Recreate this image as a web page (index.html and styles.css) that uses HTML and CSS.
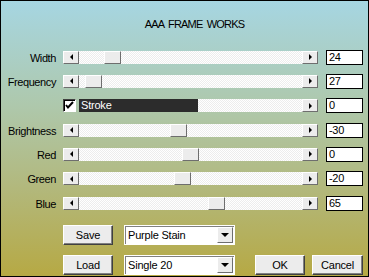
FILE: index.html
```html
<!DOCTYPE html>
<html>
<head>
<meta charset="utf-8">
<link rel="stylesheet" href="styles.css">
</head>
<body>
<div class="dialog">
  <div class="title">AAA FRAME WORKS</div>
  <div class="rows">
    <div class="row">
      <span class="label">Width</span>
      <div class="sb">
        <span class="btn"><i class="tri-l"></i></span>
        <div class="track"><span class="thumb" style="margin-left:25px"></span></div>
        <span class="btn"><i class="tri-r"></i></span>
      </div>
      <span class="edit">24</span>
    </div>
    <div class="row">
      <span class="label">Frequency</span>
      <div class="sb">
        <span class="btn"><i class="tri-l"></i></span>
        <div class="track"><span class="thumb" style="margin-left:6px"></span></div>
        <span class="btn"><i class="tri-r"></i></span>
      </div>
      <span class="edit">27</span>
    </div>
    <div class="row">
      <span class="label"></span>
      <div class="sb">
        <span class="check"><svg width="11" height="11" viewBox="0 0 11 11"><path d="M2 5 L4 7.5 L9 2" fill="none" stroke="#000" stroke-width="2"/></svg></span>
        <span class="stroke">Stroke</span>
        <div class="track"></div>
        <span class="btn"><i class="tri-r"></i></span>
      </div>
      <span class="edit">0</span>
    </div>
    <div class="row">
      <span class="label">Brightness</span>
      <div class="sb">
        <span class="btn"><i class="tri-l"></i></span>
        <div class="track"><span class="thumb" style="margin-left:91px"></span></div>
        <span class="btn"><i class="tri-r"></i></span>
      </div>
      <span class="edit">-30</span>
    </div>
    <div class="row">
      <span class="label">Red</span>
      <div class="sb">
        <span class="btn"><i class="tri-l"></i></span>
        <div class="track"><span class="thumb" style="margin-left:103px"></span></div>
        <span class="btn"><i class="tri-r"></i></span>
      </div>
      <span class="edit">0</span>
    </div>
    <div class="row">
      <span class="label">Green</span>
      <div class="sb">
        <span class="btn"><i class="tri-l"></i></span>
        <div class="track"><span class="thumb" style="margin-left:95px"></span></div>
        <span class="btn"><i class="tri-r"></i></span>
      </div>
      <span class="edit">-20</span>
    </div>
    <div class="row">
      <span class="label">Blue</span>
      <div class="sb">
        <span class="btn"><i class="tri-l"></i></span>
        <div class="track"><span class="thumb" style="margin-left:129px"></span></div>
        <span class="btn"><i class="tri-r"></i></span>
      </div>
      <span class="edit">65</span>
    </div>
  </div>
  <div class="bottom">
    <div class="brow">
      <span class="button">Save</span>
      <div class="combo"><span class="val">Purple Stain</span><span class="dd"><i class="tri-d"></i></span></div>
    </div>
    <div class="brow">
      <span class="button">Load</span>
      <div class="combo"><span class="val">Single 20</span><span class="dd"><i class="tri-d"></i></span></div>
      <span class="button ok">OK</span>
      <span class="button cancel">Cancel</span>
    </div>
  </div>
</div>
</body>
</html>
```

FILE: styles.css
```css
html, body { margin: 0; padding: 0; }
* { box-sizing: border-box; }

.dialog {
  width: 369px;
  height: 277px;
  border: 1px solid #000;
  background: linear-gradient(to bottom, #a6d6e2 0%, #aec8ac 38%, #b2b87c 68%, #b6a944 100%);
  font-family: "Liberation Sans", Arial, sans-serif;
  font-size: 11px;
  color: #000;
  padding-top: 17px;
}

.title {
  text-align: center;
  line-height: 13px;
  height: 13px;
  letter-spacing: -0.8px;
  word-spacing: 2px;
  padding-left: 20px;
}

.rows { margin-top: 14px; }

.row {
  display: flex;
  align-items: center;
  height: 24.33px;
}

.label {
  width: 55px;
  margin-right: 7px;
  text-align: right;
  line-height: 13px;
  padding-top: 2px;
  letter-spacing: -0.4px;
  white-space: nowrap;
}

.sb {
  display: flex;
  width: 255px;
  height: 13px;
}

.btn, .thumb, .dd {
  width: 16px;
  height: 13px;
  flex: none;
  background: #ececec;
  border: 1px solid;
  border-color: #fff #6e6e6e #6e6e6e #fff;
  display: flex;
  align-items: center;
  justify-content: center;
}

.thumb { width: 17px; }

.track {
  flex: 1;
  display: flex;
  background-color: #fff;
  background-image: repeating-conic-gradient(#ededed 0 25%, #fff 0 50%);
  background-size: 2px 2px;
}

.tri-l {
  width: 0; height: 0;
  border-top: 3px solid transparent;
  border-bottom: 3px solid transparent;
  border-right: 3px solid #000;
}
.tri-r {
  width: 0; height: 0;
  border-top: 3px solid transparent;
  border-bottom: 3px solid transparent;
  border-left: 3px solid #000;
}
.tri-d {
  width: 0; height: 0;
  border-left: 4px solid transparent;
  border-right: 4px solid transparent;
  border-top: 4px solid #000;
}

.check {
  width: 13px;
  height: 13px;
  flex: none;
  background: #fff;
  border: 1px solid;
  border-color: #404040 #fff #fff #404040;
  box-shadow: inset 1px 1px 0 #000;
  display: flex;
  align-items: center;
  justify-content: center;
  margin-right: 3px;
}

.stroke {
  width: 119px;
  flex: none;
  height: 13px;
  background: #2c2c2c;
  color: #fff;
  line-height: 13px;
  padding-left: 2px;
  letter-spacing: -0.2px;
}

.edit {
  margin-left: 8px;
  width: 37px;
  height: 15px;
  background: #fff;
  border: 1px solid #000;
  line-height: 13px;
  padding-left: 2px;
  letter-spacing: -0.3px;
}

.bottom {
  margin-top: 10px;
  padding-left: 62px;
  display: flex;
  flex-direction: column;
  gap: 10px;
}

.brow {
  display: flex;
  align-items: center;
  height: 20px;
}

.button {
  width: 50px;
  height: 20px;
  background: #ececec;
  border: 1px solid;
  border-color: #fff #404040 #404040 #fff;
  box-shadow: inset -1px -1px 0 #808080;
  display: flex;
  align-items: center;
  justify-content: center;
  line-height: 13px;
  letter-spacing: -0.2px;
}

.combo {
  margin-left: 11px;
  width: 111px;
  height: 20px;
  display: flex;
  align-items: center;
  background: #fff;
  border: 1px solid #fff;
  box-shadow: inset 1px 1px 0 #808080;
  padding: 1px 1px 1px 3px;
}
.combo .val {
  flex: 1;
  line-height: 13px;
  letter-spacing: -0.2px;
  white-space: nowrap;
}
.combo .dd {
  height: 16px;
}

.ok { margin-left: 20px; }
.cancel { margin-left: 7px; width: 51px; }
```
